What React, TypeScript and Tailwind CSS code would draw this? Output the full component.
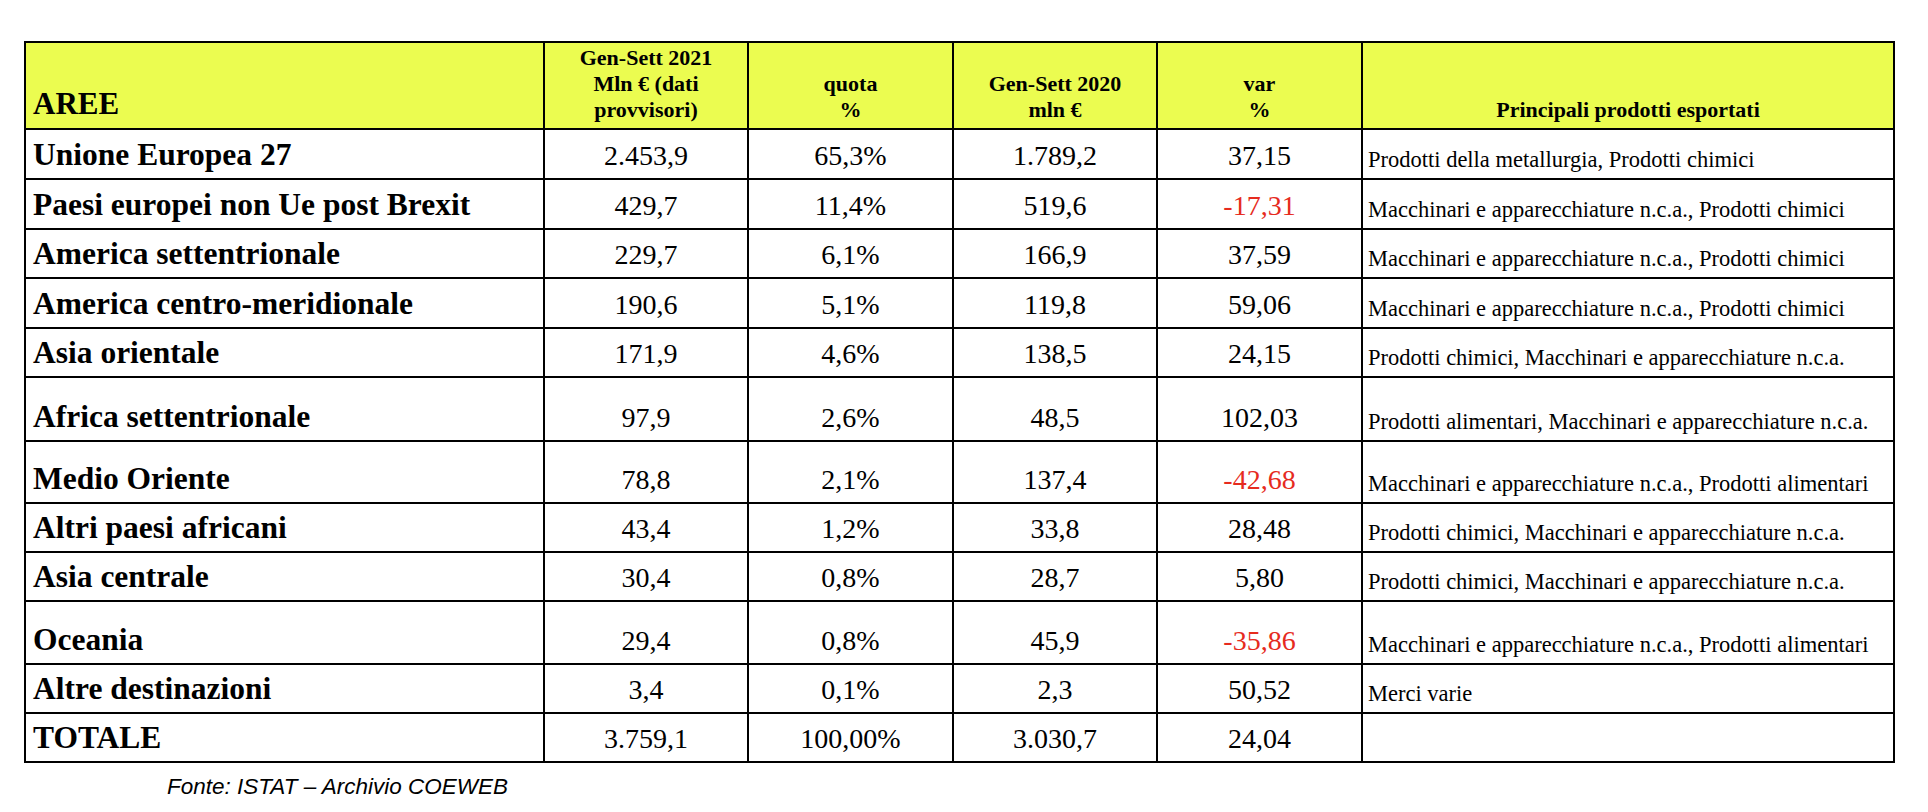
import React from "react";

type Row = {
  area: string;
  v21: string;
  quota: string;
  v20: string;
  varp: string;
  neg?: boolean;
  prod: string;
  h: string;
};

const rows: Row[] = [
  { area: "Unione Europea 27", v21: "2.453,9", quota: "65,3%", v20: "1.789,2", varp: "37,15", prod: "Prodotti della metallurgia, Prodotti chimici", h: "h-[48px]" },
  { area: "Paesi europei non Ue post Brexit", v21: "429,7", quota: "11,4%", v20: "519,6", varp: "-17,31", neg: true, prod: "Macchinari e apparecchiature n.c.a., Prodotti chimici", h: "h-[48px]" },
  { area: "America settentrionale", v21: "229,7", quota: "6,1%", v20: "166,9", varp: "37,59", prod: "Macchinari e apparecchiature n.c.a., Prodotti chimici", h: "h-[47px]" },
  { area: "America centro-meridionale", v21: "190,6", quota: "5,1%", v20: "119,8", varp: "59,06", prod: "Macchinari e apparecchiature n.c.a., Prodotti chimici", h: "h-[48px]" },
  { area: "Asia orientale", v21: "171,9", quota: "4,6%", v20: "138,5", varp: "24,15", prod: "Prodotti chimici, Macchinari e apparecchiature n.c.a.", h: "h-[47px]" },
  { area: "Africa settentrionale", v21: "97,9", quota: "2,6%", v20: "48,5", varp: "102,03", prod: "Prodotti alimentari, Macchinari e apparecchiature n.c.a.", h: "h-[62px]" },
  { area: "Medio Oriente", v21: "78,8", quota: "2,1%", v20: "137,4", varp: "-42,68", neg: true, prod: "Macchinari e apparecchiature n.c.a., Prodotti alimentari", h: "h-[60px]" },
  { area: "Altri paesi africani", v21: "43,4", quota: "1,2%", v20: "33,8", varp: "28,48", prod: "Prodotti chimici, Macchinari e apparecchiature n.c.a.", h: "h-[47px]" },
  { area: "Asia centrale", v21: "30,4", quota: "0,8%", v20: "28,7", varp: "5,80", prod: "Prodotti chimici, Macchinari e apparecchiature n.c.a.", h: "h-[47px]" },
  { area: "Oceania", v21: "29,4", quota: "0,8%", v20: "45,9", varp: "-35,86", neg: true, prod: "Macchinari e apparecchiature n.c.a., Prodotti alimentari", h: "h-[61px]" },
  { area: "Altre destinazioni", v21: "3,4", quota: "0,1%", v20: "2,3", varp: "50,52", prod: "Merci varie", h: "h-[47px]" },
  { area: "TOTALE", v21: "3.759,1", quota: "100,00%", v20: "3.030,7", varp: "24,04", prod: "", h: "h-[47px]" },
];

const head = "bg-[#ebfc50] flex flex-col justify-end items-center text-center pb-[5px] text-[22px] leading-[26px] font-bold";
const num = "bg-white flex items-end justify-center pb-[8px] text-[28px] leading-[28px] whitespace-nowrap";

export default function App() {
  return (
    <div className="min-h-screen bg-white pt-[41px] pl-[24px] text-black" style={{ fontFamily: '"Liberation Serif", "Times New Roman", serif' }}>
      <div className="grid w-[1871px] grid-cols-[517px_202px_203px_202px_203px_530px] gap-[2px] bg-black p-[2px]">
        {/* header */}
        <div className="bg-[#ebfc50] h-[85px] flex items-end pl-[7px] pb-[9px] text-[31px] leading-[30px] font-bold">AREE</div>
        <div className={head}>
          <span>Gen-Sett 2021</span>
          <span>Mln € (dati</span>
          <span>provvisori)</span>
        </div>
        <div className={head}>
          <span>quota</span>
          <span>%</span>
        </div>
        <div className={head}>
          <span>Gen-Sett 2020</span>
          <span>mln €</span>
        </div>
        <div className={head}>
          <span>var</span>
          <span>%</span>
        </div>
        <div className={`${head} text-[22.5px]`}>
          <span>Principali prodotti esportati</span>
        </div>

        {rows.map((r) => (
          <React.Fragment key={r.area}>
            <div className={`bg-white ${r.h} flex items-end pl-[7px] pb-[8px] text-[31.5px] leading-[30px] font-bold whitespace-nowrap`}>{r.area}</div>
            <div className={num}>{r.v21}</div>
            <div className={num}>{r.quota}</div>
            <div className={num}>{r.v20}</div>
            <div className={`${num} ${r.neg ? "text-[#e62b1e]" : ""}`}>{r.varp}</div>
            <div className="bg-white flex items-end pl-[5px] pb-[7px] text-[22.5px] leading-[22px] whitespace-nowrap">{r.prod}</div>
          </React.Fragment>
        ))}
      </div>
      <div
        className="mt-[13px] pl-[143px] text-[22.5px] leading-[22px] italic"
        style={{ fontFamily: '"Liberation Sans", Arial, sans-serif' }}
      >
        Fonte: ISTAT – Archivio COEWEB
      </div>
    </div>
  );
}
